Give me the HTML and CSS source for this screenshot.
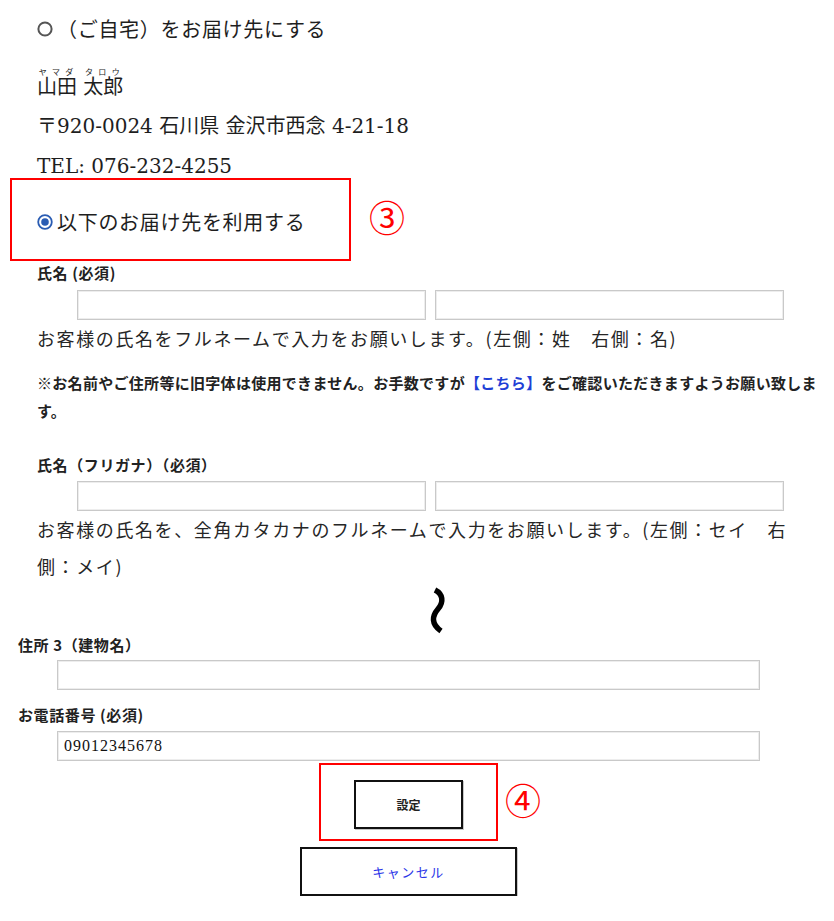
FILE: index.html
```html
<!DOCTYPE html>
<html lang="ja">
<head>
<meta charset="utf-8">
<title>お届け先</title>
<link rel="stylesheet" href="styles.css">
</head>
<body>
<div class="page">
  <section class="upper">
    <div class="home">
      <label class="opt">
        <svg class="radio" width="16" height="16" viewBox="0 0 16 16"><circle cx="8" cy="8" r="6.6" fill="#fff" stroke="#555" stroke-width="2"/></svg>
        <span>（ご自宅）をお届け先にする</span>
      </label>
      <p class="name"><ruby>山田<rt>ヤマダ</rt></ruby> <ruby>太郎<rt>タロウ</rt></ruby></p>
      <p class="addr">〒920-0024 石川県 金沢市西念 4-21-18</p>
      <p class="tel">TEL: 076-232-4255</p>
    </div>
    <div class="callout-row">
      <div class="callout">
        <label class="opt">
          <svg class="radio" width="16" height="16" viewBox="0 0 16 16"><circle cx="8" cy="8" r="6.8" fill="#fff" stroke="#2a5cb3" stroke-width="1.8"/><circle cx="8" cy="8" r="3.8" fill="#2a5cb3"/></svg>
          <span>以下のお届け先を利用する</span>
        </label>
      </div>
      <span class="num">③</span>
    </div>

    <div class="form">
      <p class="label lbl1">氏名 (必須)</p>
      <div class="pair pair1">
        <input class="field" type="text">
        <input class="field" type="text">
      </div>
      <p class="help">お客様の氏名をフルネームで入力をお願いします。(左側：姓　右側：名)</p>
      <p class="note">※お名前やご住所等に旧字体は使用できません。お手数ですが<a href="#">【こちら】</a>をご確認いただきますようお願い致します。</p>

      <p class="label lbl2">氏名（フリガナ）（必須）</p>
      <div class="pair pair2">
        <input class="field" type="text">
        <input class="field" type="text">
      </div>
      <p class="help">お客様の氏名を、全角カタカナのフルネームで入力をお願いします。(左側：セイ　右側：メイ)</p>
    </div>
  </section>

  <svg class="squiggle" width="20" height="48" viewBox="0 0 20 48"><path d="M7 4 C 15 8, 16 16, 10 23 C 4 30, 3 38, 13 45" fill="none" stroke="#000" stroke-width="5.5"/></svg>

  <section class="lower">
    <p class="label lbl3">住所 3（建物名）</p>
    <input class="field wide w1" type="text">
    <p class="label lbl4">お電話番号 (必須)</p>
    <input class="field wide w2 tel-input" type="text" value="09012345678">

    <div class="actions">
      <div class="confirm-wrap">
        <button class="btn btn-set" type="button">設定</button>
        <span class="num num4">④</span>
      </div>
      <button class="btn btn-cancel" type="button">キャンセル</button>
    </div>
  </section>
</div>
</body>
</html>
```

FILE: styles.css
```css
html, body {
  margin: 0;
  padding: 0;
  background: #fff;
}

body {
  font-family: "Noto Sans CJK JP", sans-serif;
  color: #222;
}

p {
  margin: 0;
}

.page {
  width: 834px;
}

.upper {
  padding: 17px 0 0 37px;
}

.home {
  font-family: "DejaVu Serif", "Noto Sans CJK JP", serif;
  font-size: 20px;
  line-height: 24px;
  color: #1e1e1e;
}

.opt {
  display: flex;
  align-items: center;
  gap: 4px;
  font-family: "Noto Sans CJK JP", sans-serif;
  font-size: 20px;
  line-height: 24px;
  letter-spacing: 0.7px;
  color: #1e1e1e;
}

.radio {
  display: block;
  flex: none;
}

.name {
  margin-top: 26px;
}

.name rt {
  font-size: 8px;
  letter-spacing: 2px;
  font-family: "Noto Sans CJK JP", sans-serif;
}

.addr {
  margin-top: 15px;
}

.tel {
  margin-top: 16px;
}

.callout-row {
  display: flex;
  align-items: flex-start;
  margin-left: -27px;
}

.callout {
  box-sizing: border-box;
  width: 341px;
  height: 83px;
  border: 2px solid #ff0000;
  display: flex;
  align-items: center;
  padding: 4px 0 0 25px;
}

.num {
  font-family: "Noto Sans CJK JP", sans-serif;
  font-size: 36px;
  line-height: 36px;
  color: #ff0000;
}

.callout-row .num {
  margin: 20px 0 0 18px;
}

.label {
  font-weight: bold;
  font-size: 15px;
  line-height: 20px;
  letter-spacing: 0.6px;
  color: #222;
}

.lbl1 {
  margin-top: 2px;
}

.pair {
  display: flex;
  gap: 9px;
  margin-left: 40px;
}

.pair1 {
  margin-top: 7px;
}

.pair2 {
  margin-top: 6px;
}

.field {
  box-sizing: border-box;
  display: block;
  width: 349px;
  height: 30px;
  margin: 0;
  padding: 0 6px;
  border: 1px solid #c9c9c9;
  box-shadow: inset 0 0 0 1px #ededed;
  background: #fff;
  outline: none;
}

.help {
  width: 755px;
  font-size: 18px;
  line-height: 37px;
  letter-spacing: 1.6px;
  color: #262626;
}

.note {
  width: 790px;
  margin-top: 12px;
  font-size: 15px;
  font-weight: bold;
  line-height: 28px;
  letter-spacing: 0.3px;
  color: #222;
}

.note a {
  color: #1f3fd6;
  text-decoration: none;
}

.lbl2 {
  margin-top: 30px;
}

.squiggle {
  display: block;
  margin: 1px 0 0 428px;
}

.lower {
  padding-left: 18px;
}

.lbl3 {
  margin-top: 1px;
}

.wide {
  width: 703px;
  margin-left: 39px;
}

.w1 {
  margin-top: 5px;
}

.lbl4 {
  margin-top: 15px;
}

.w2 {
  margin-top: 6px;
}

.tel-input {
  font-family: "Liberation Serif", serif;
  font-size: 16px;
  letter-spacing: 1px;
  color: #111;
}

.actions {
  width: 703px;
  margin-left: 39px;
  display: flex;
  flex-direction: column;
  align-items: center;
}

.confirm-wrap {
  position: relative;
  margin-top: 2px;
  border: 2px solid #ff0000;
  padding: 15px 33px 10px;
}

.btn {
  display: block;
  box-sizing: border-box;
  height: 49px;
  margin: 0;
  padding: 0;
  border: 2px solid #111;
  background: #fff;
  box-shadow: 1px 1px 0 #c8c8c8;
  font-family: "Noto Sans CJK JP", sans-serif;
  cursor: pointer;
}

.btn-set {
  width: 109px;
  font-size: 12px;
  font-weight: bold;
  color: #222;
}

.num4 {
  position: absolute;
  left: calc(100% + 9px);
  top: 16px;
}

.btn-cancel {
  width: 217px;
  margin-top: 6px;
  font-size: 13px;
  letter-spacing: 1.5px;
  color: #2b35e8;
}
```
